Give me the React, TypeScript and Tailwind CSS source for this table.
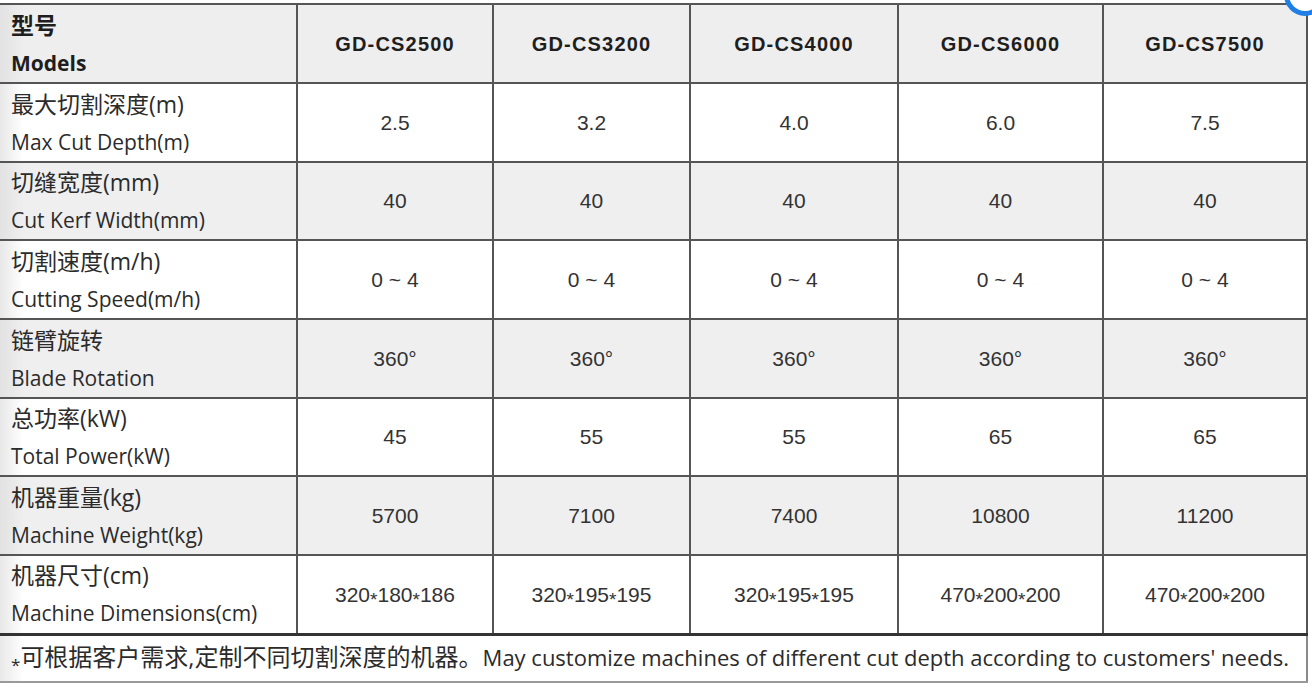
const models = ["GD-CS2500", "GD-CS3200", "GD-CS4000", "GD-CS6000", "GD-CS7500"];

const rows = [
  { zh: "最大切割深度(m)", en: "Max Cut Depth(m)", values: ["2.5", "3.2", "4.0", "6.0", "7.5"] },
  { zh: "切缝宽度(mm)", en: "Cut Kerf Width(mm)", values: ["40", "40", "40", "40", "40"] },
  { zh: "切割速度(m/h)", en: "Cutting Speed(m/h)", values: ["0 ~ 4", "0 ~ 4", "0 ~ 4", "0 ~ 4", "0 ~ 4"] },
  { zh: "链臂旋转", en: "Blade Rotation", values: ["360°", "360°", "360°", "360°", "360°"] },
  { zh: "总功率(kW)", en: "Total Power(kW)", values: ["45", "55", "55", "65", "65"] },
  { zh: "机器重量(kg)", en: "Machine Weight(kg)", values: ["5700", "7100", "7400", "10800", "11200"] },
  {
    zh: "机器尺寸(cm)",
    en: "Machine Dimensions(cm)",
    values: ["320*180*186", "320*195*195", "320*195*195", "470*200*200", "470*200*200"],
  },
];

const labelFont = "font-['Open_Sans','Noto_Sans_CJK_SC',sans-serif]";
const valueFont = "font-['Liberation_Sans','Noto_Sans_CJK_SC',sans-serif]";

// the asterisks in the sizes sit at mid height, not up high
const Value = ({ text }: { text: string }) => {
  const parts = text.split("*");
  return (
    <>
      {parts.map((p, i) => (
        <span key={i}>
          {i > 0 && <span className="relative top-[4px] text-[19px]">*</span>}
          {p}
        </span>
      ))}
    </>
  );
};

const App: React.FC = () => {
  return (
    <div className="relative w-[1312px] h-[688px] bg-white overflow-hidden text-[#2b2b2b]">
      <div className="absolute -top-[26px] -right-[14px] w-[42px] h-[42px] rounded-full border-[5px] border-[#1f7fe6] bg-white" />

      <table className="mt-[3px] w-[1307px] table-fixed border-collapse">
        <colgroup>
          <col className="w-[297px]" />
          <col className="w-[196px]" />
          <col className="w-[197px]" />
          <col className="w-[208px]" />
          <col className="w-[205px]" />
          <col className="w-[204px]" />
        </colgroup>
        <thead>
          <tr className="h-[79px] bg-[#eeeeee]">
            <th
              className={`p-0 border-2 border-l-0 border-[#555] pl-[11px] text-left align-middle font-bold text-[21px] text-[#1e1e1e] bg-[linear-gradient(to_right,#e2e2e2,#eeeeee_24px)] ${labelFont}`}
            >
              <div className="leading-[38px] text-[23px]">型号</div>
              <div className="leading-[38px]">Models</div>
            </th>
            {models.map((m) => (
              <th
                key={m}
                className={`p-0 border-2 border-[#555] text-center align-middle font-bold text-[20px] tracking-[1.2px] text-[#1e1e1e] ${valueFont}`}
              >
                {m}
              </th>
            ))}
          </tr>
        </thead>
        <tbody>
          {rows.map((r, i) => {
            const gray = i % 2 === 1;
            return (
              <tr key={r.en} className={`${i % 3 === 1 ? "h-[78px]" : "h-[79px]"} ${gray ? "bg-[#efefef]" : "bg-white"}`}>
                <td
                  className={`p-0 border-2 border-l-0 border-[#555] pl-[11px] align-middle text-[21px] ${labelFont} ${
                    gray
                      ? "bg-[linear-gradient(to_right,#e2e2e2,#efefef_24px)]"
                      : "bg-[linear-gradient(to_right,#e8e8e8,#ffffff_24px)]"
                  } ${i === rows.length - 1 ? "border-b-[3px] border-b-[#333]" : ""}`}
                >
                  <div className="leading-[38px] whitespace-nowrap text-[23px]">{r.zh}</div>
                  <div className="leading-[38px] whitespace-nowrap">{r.en}</div>
                </td>
                {r.values.map((v, j) => (
                  <td
                    key={j}
                    className={`p-0 border-2 border-[#555] text-center align-middle text-[21px] text-[#333] ${valueFont} ${
                      i === rows.length - 1 ? "border-b-[3px] border-b-[#333]" : ""
                    }`}
                  >
                    <Value text={v} />
                  </td>
                ))}
              </tr>
            );
          })}
          <tr className="h-[48px]">
            <td
              colSpan={6}
              className={`p-0 border-b-2 border-b-[#9a9a9a] border-r-2 border-r-[#8a8a8a] pl-[11px] align-middle text-[22px] leading-[30px] whitespace-nowrap bg-[linear-gradient(to_right,#e8e8e8,#ffffff_24px)] ${labelFont}`}
            >
              <span className="relative top-[5px] text-[17px]">*</span>
              <span className="text-[24px]">可根据客户需求,定制不同切割深度的机器。</span>
              May customize machines of different cut depth according to customers' needs.
            </td>
          </tr>
        </tbody>
      </table>
    </div>
  );
};

export default App;
